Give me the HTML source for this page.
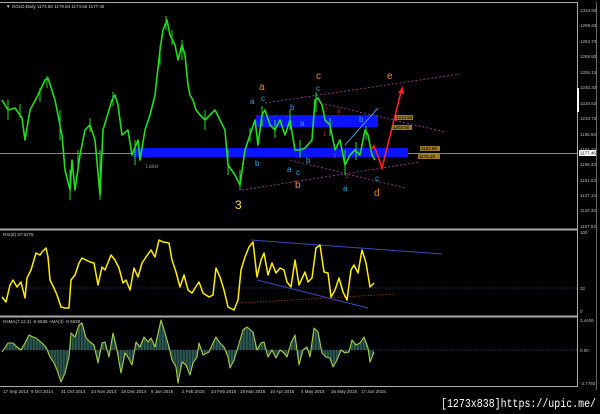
<!DOCTYPE html><html><head><style>html,body{margin:0;padding:0;background:#000;width:600px;height:414px;overflow:hidden}</style></head><body>
<svg width="600" height="414" viewBox="0 0 600 414" xmlns="http://www.w3.org/2000/svg" font-family="Liberation Sans, sans-serif">
<rect width="600" height="414" fill="#000"/>
<g stroke="#aaa" stroke-width="1" fill="none">
<line x1="0" y1="2.5" x2="577" y2="2.5"/>
<line x1="577.5" y1="2" x2="577.5" y2="387"/>
<line x1="596.5" y1="2" x2="596.5" y2="390" stroke="#666"/>
<line x1="0" y1="229.5" x2="577" y2="229.5" stroke-width="2"/>
<line x1="0" y1="316.5" x2="577" y2="316.5" stroke-width="2"/>
<line x1="0" y1="386.5" x2="577" y2="386.5"/>
</g>
<line x1="578" y1="88" x2="578" y2="112" stroke="#fff" stroke-width="2"/>
<text x="6" y="8" font-size="4.5" fill="#ccc">▼ GOLD,Daily  1174.56 1179.84 1174.56 1177.46</text>
<line x1="0" y1="153.5" x2="577" y2="153.5" stroke="#888" stroke-width="1"/>
<rect x="133" y="148" width="275" height="9" fill="#0a14ff"/>
<rect x="256" y="115" width="122" height="12" fill="#0a14ff"/>
<g stroke="#b03cb0" stroke-width="0.8" stroke-dasharray="2,2" fill="none">
<line x1="265" y1="103" x2="460" y2="74"/>
<line x1="242" y1="190" x2="420" y2="162"/>
<line x1="325" y1="104" x2="445" y2="132"/>
<line x1="290" y1="160" x2="405" y2="188"/>
</g>
<g fill="none" stroke="#22dd22" stroke-width="1.6" stroke-linejoin="round">
<polyline points="2,100 8,110 15,108 22,118 25,140 30,110 38,95 45,80 48,78 55,100 58,115 62,135 65,170 70,190 72,160 75,190 80,155 85,130 90,125 95,140 100,195 103,130 112,100 115,95 118,105 122,135 128,130 132,155 138,140 140,160 145,130 150,115 155,95 160,50 163,30 167,20 170,35 175,45 178,60 182,45 185,55 188,85 190,95 193,100 196,110 200,115 205,120 210,115 215,110 220,120 225,130 228,165 235,175 240,185 245,150 250,135 255,120 258,145 262,115 265,110 270,125 275,130 280,120 285,135 290,120 295,150 300,150 305,148 312,140 315,100 318,98 322,105 325,120 330,125 335,150 340,140 345,165 350,155 355,150 360,155 362,145 365,130 368,135 372,155 375,160"/>
</g>
<g stroke="#22dd22" stroke-width="1">
<path d="M8 100v20M20 104v14M40 88v14M47 76v12M60 110v30M70 170v30M78 150v20M90 118v14M100 150v50M113 92v14M135 140v25M160 45v20M166 16v14M172 30v15M182 40v20M205 110v20M228 150v25M240 170v20M250 128v14M262 106v20M275 120v18M290 110v20M300 140v18M316 92v20M330 118v18M345 150v25M356 142v18M366 126v14"/>
</g>
<line x1="345" y1="145" x2="378" y2="108" stroke="#4ab0ff" stroke-width="0.9"/>
<polyline points="371,150 374,146 378,156 382,168 401,92" fill="none" stroke="#ff2020" stroke-width="1.6"/>
<polygon points="403,86 398,93 404,94" fill="#ff2020"/>
<g font-size="10" fill="#ee8a22">
<text x="259" y="90">a</text><text x="316" y="79">c</text><text x="387" y="79">e</text><text x="374" y="196">d</text><text x="295" y="188">b</text>
</g>
<text x="235" y="209" font-size="12" fill="#ffdd33">3</text>
<g font-size="8" fill="#29a8e6">
<text x="250" y="104">a</text><text x="261" y="101">c</text><text x="316" y="91">c</text><text x="290" y="110">b</text><text x="359" y="122">b</text><text x="300" y="126">a</text>
<text x="255" y="166">b</text><text x="306" y="163">b</text><text x="287" y="172">a</text><text x="296" y="175">c</text><text x="343" y="191">a</text><text x="375" y="181">c</text>
</g>
<g font-size="6" fill="#cc2222"><text x="337" y="113">a</text><text x="324" y="112">2</text><text x="323" y="136">1</text><text x="333" y="158">3</text><text x="345" y="178">5</text></g>
<text x="146" y="168" font-size="5" fill="#888">Label</text>
<g font-size="4.5" fill="#000">
<rect x="395" y="115" width="18" height="5" fill="#9a7a20"/><text x="396" y="119.2">1213.58</text>
<rect x="392" y="125" width="20" height="5" fill="#9a7a20"/><text x="393" y="129.2">1202.50</text>
<rect x="420" y="146" width="20" height="5" fill="#9a7a20"/><text x="421" y="150.2">1182.96</text>
<rect x="418" y="154" width="22" height="5" fill="#9a7a20"/><text x="419" y="158.2">1175.48</text>
</g>
<g font-size="4.5" fill="#bbb">
<text x="580" y="12">1313.93</text><text x="580" y="27">1299.33</text><text x="580" y="43">1284.73</text><text x="580" y="58">1269.93</text><text x="580" y="74">1255.13</text><text x="580" y="89">1240.33</text><text x="580" y="105">1225.53</text><text x="580" y="120">1210.73</text><text x="580" y="136">1195.93</text><text x="580" y="151">1181.13</text><text x="580" y="166">1166.33</text><text x="580" y="182">1151.53</text><text x="580" y="197">1137.13</text><text x="580" y="212">1122.33</text><text x="580" y="228">1107.53</text>
<text x="580" y="234">100</text><text x="580" y="290">32</text><text x="580" y="313">0</text>
<text x="580" y="322">3.4406</text><text x="580" y="352">0.00</text><text x="580" y="385">-3.7793</text>
</g>
<rect x="579" y="150" width="17" height="6" fill="#fff"/><text x="580" y="154.6" font-size="4.5" fill="#000">1177.46</text>
<text x="3" y="236" font-size="4.5" fill="#ccc">RSI(8) 37.6276</text>
<line x1="0" y1="288" x2="577" y2="288" stroke="#3a3a7a" stroke-width="0.7" stroke-dasharray="1.5,1.5"/>
<line x1="251" y1="240" x2="442" y2="254" stroke="#3a4cbb" stroke-width="1"/>
<line x1="257" y1="280" x2="368" y2="308" stroke="#3a4cbb" stroke-width="1"/>
<line x1="239" y1="303" x2="395" y2="294" stroke="#aa3322" stroke-width="0.8" stroke-dasharray="1.5,1.5"/>
<polyline fill="none" stroke="#ffee00" stroke-width="1.5" stroke-linejoin="round" points="2,297 6,302 10,285 13,280 17,287 21,282 25,298 27,278 31,270 36,253 40,255 42,252 46,248 48,257 50,280 54,288 57,295 61,307 65,308 69,308 71,280 75,275 79,263 82,258 86,260 90,262 94,263 98,285 102,267 105,270 111,255 115,260 119,268 123,283 126,280 130,290 134,268 138,277 142,263 146,257 151,250 155,257 159,240 163,242 169,243 172,260 176,272 180,287 184,275 188,290 192,293 195,288 199,282 203,293 209,297 213,295 216,268 220,277 224,290 228,307 234,310 238,300 241,270 245,257 249,247 253,242 257,277 261,260 264,253 268,275 272,263 276,273 280,268 284,270 287,282 291,287 295,260 299,285 305,272 308,282 312,278 316,248 320,245 324,272 328,273 331,297 335,290 339,278 343,292 347,300 351,270 354,265 358,273 362,250 366,263 370,287 374,283"/>
<text x="3" y="323" font-size="4.5" fill="#ccc">OsMA(7,12,3) -0.6638  ~MA(3) -0.6638</text>
<line x1="0" y1="350" x2="577" y2="350" stroke="#3a3a7a" stroke-width="0.7" stroke-dasharray="1.5,1.5"/>
<defs><pattern id="hb" width="1.5" height="4" patternUnits="userSpaceOnUse"><rect width="0.8" height="4" fill="#3a7468"/><rect x="0.8" width="0.7" height="4" fill="#142c2a"/></pattern></defs>
<polygon fill="url(#hb)" points="2,350 2,352 8,343 13,343 17,347 21,350 25,343 29,335 33,337 36,338 42,343 46,347 50,357 54,363 57,370 61,382 65,373 69,357 71,333 75,337 79,325 82,323 86,338 90,342 94,345 98,363 102,343 105,342 109,357 113,333 117,350 121,373 125,353 128,357 132,365 136,342 140,347 144,337 148,342 151,338 155,347 161,320 165,333 169,347 172,360 176,367 178,383 182,362 186,365 190,375 193,363 197,357 199,343 203,355 209,352 213,343 216,337 220,343 224,347 228,357 230,368 234,360 238,347 243,330 247,327 253,332 257,350 261,343 264,342 268,357 272,350 276,358 280,350 284,353 287,357 291,343 295,335 299,365 303,350 307,347 310,357 314,328 318,332 322,353 326,357 330,358 333,367 337,360 341,350 345,353 349,352 352,340 356,345 360,343 364,337 368,348 370,362 374,352 374,350"/>
<polyline fill="none" stroke="#a8d048" stroke-width="1.1" stroke-linejoin="round" points="2,352 8,343 13,343 17,347 21,350 25,343 29,335 33,337 36,338 42,343 46,347 50,357 54,363 57,370 61,382 65,373 69,357 71,333 75,337 79,325 82,323 86,338 90,342 94,345 98,363 102,343 105,342 109,357 113,333 117,350 121,373 125,353 128,357 132,365 136,342 140,347 144,337 148,342 151,338 155,347 161,320 165,333 169,347 172,360 176,367 178,383 182,362 186,365 190,375 193,363 197,357 199,343 203,355 209,352 213,343 216,337 220,343 224,347 228,357 230,368 234,360 238,347 243,330 247,327 253,332 257,350 261,343 264,342 268,357 272,350 276,358 280,350 284,353 287,357 291,343 295,335 299,365 303,350 307,347 310,357 314,328 318,332 322,353 326,357 330,358 333,367 337,360 341,350 345,353 349,352 352,340 356,345 360,343 364,337 368,348 370,362 374,352"/>
<g font-size="4.5" fill="#ccc">
<text x="3" y="393">17 Sep 2014</text><text x="31" y="393">9 Oct 2014</text><text x="61" y="393">31 Oct 2014</text><text x="91" y="393">24 Nov 2014</text><text x="121" y="393">16 Dec 2014</text><text x="151" y="393">9 Jan 2015</text><text x="182" y="393">2 Feb 2015</text><text x="211" y="393">24 Feb 2015</text><text x="240" y="393">18 Mar 2015</text><text x="270" y="393">10 Apr 2015</text><text x="301" y="393">4 May 2015</text><text x="331" y="393">26 May 2015</text><text x="361" y="393">17 Jun 2015</text>
</g>
<text x="441" y="407" font-size="12" fill="#fff" font-family="Liberation Mono, monospace" textLength="155" lengthAdjust="spacingAndGlyphs">[1273x838]https://upic.me/</text>
</svg>
</body></html>
